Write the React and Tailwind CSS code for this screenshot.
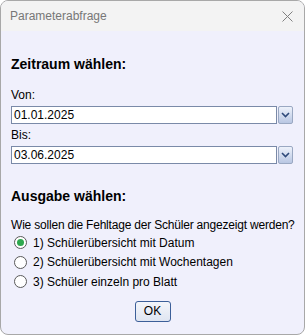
import { useState } from 'react'

const font = { fontFamily: '"Liberation Sans", Arial, sans-serif' }

function Combo({ value }) {
  return (
    <div className="mt-[3px] flex h-[18px] items-stretch pr-[1px]">
      <div className="flex flex-1 items-center border border-[#7a8aa8] bg-white px-[2px] text-[12px] text-black">
        {value}
      </div>
      <div className="ml-[1px] flex w-[15px] items-center justify-center rounded-[2px] border border-[#9aa8c2] bg-gradient-to-b from-[#eef2fb] to-[#b9c7e3]">
        <svg width="9" height="6" viewBox="0 0 9 6">
          <path d="M1 1 L4.5 4.5 L8 1" fill="none" stroke="#2f4a7a" strokeWidth="1.6" />
        </svg>
      </div>
    </div>
  )
}

function Radio({ checked, label, onClick }) {
  return (
    <div className="flex h-[19.5px] cursor-default items-center gap-[6px]" onClick={onClick}>
      <span className="flex h-[13px] w-[13px] items-center justify-center rounded-full border border-[#5a5a5a] bg-white">
        {checked && <span className="h-[7px] w-[7px] rounded-full bg-[#2ea84f]" />}
      </span>
      <span className="text-[12px] text-black">{label}</span>
    </div>
  )
}

export default function App() {
  const [mode, setMode] = useState(0)
  const options = [
    '1) Schülerübersicht mit Datum',
    '2) Schülerübersicht mit Wochentagen',
    '3) Schüler einzeln pro Blatt',
  ]

  return (
    <div className="h-[335px] w-[305px] bg-white" style={font}>
      <div className="flex h-full flex-col overflow-hidden rounded-[8px] border border-[#a8a8a8] bg-[#f0f0fc]">
        {/* title bar */}
        <div className="flex h-[30px] shrink-0 items-center justify-between bg-[#f3f3f3] pl-[9px] pr-[11px]">
          <span className="text-[12px] text-[#777]">Parameterabfrage</span>
          <svg width="11" height="11" viewBox="0 0 11 11">
            <path d="M0.5 0.5 L10.5 10.5 M10.5 0.5 L0.5 10.5" stroke="#808080" strokeWidth="1" />
          </svg>
        </div>

        <div className="flex flex-col pl-[10px] pr-[10px] pt-[23px]">
          <div className="text-[14px] font-bold leading-[20px] text-black">Zeitraum wählen:</div>

          <div className="mt-[13px] text-[12px] leading-[16px] text-black">Von:</div>
          <Combo value="01.01.2025" />
          <div className="mt-[3px] text-[12px] leading-[16px] text-black">Bis:</div>
          <Combo value="03.06.2025" />

          <div className="mt-[22px] text-[14px] font-bold leading-[20px] text-black">Ausgabe wählen:</div>
          <div className="mt-[11px] whitespace-nowrap text-[12px] leading-[16px] tracking-[-0.2px] text-black">
            Wie sollen die Fehltage der Schüler angezeigt werden?
          </div>
          <div className="flex flex-col pl-[3px]">
            {options.map((o, i) => (
              <Radio key={o} label={o} checked={mode === i} onClick={() => setMode(i)} />
            ))}
          </div>

          <div className="mt-[9px] flex justify-center">
            <button className="h-[21px] w-[36px] rounded-[3px] border border-[#3c5f99] bg-gradient-to-b from-[#f4f6fb] to-[#dfe5f1] text-[12px] text-black">
              OK
            </button>
          </div>
        </div>
      </div>
    </div>
  )
}
